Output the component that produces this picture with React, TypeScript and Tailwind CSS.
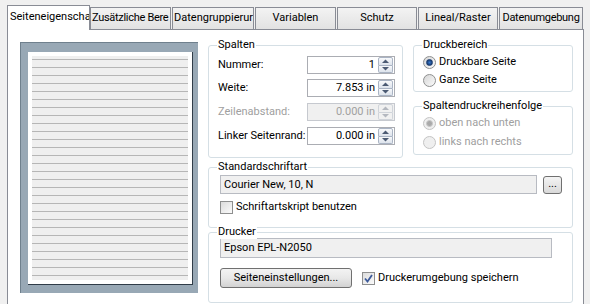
import React from "react";

const FONT = { fontFamily: "Roboto, 'Noto Sans', sans-serif" };

function Spinner({ disabled = false }: { disabled?: boolean }) {
  const arrow = disabled ? "#b4b8bf" : "#4b5a73";
  const border = disabled ? "border-[#d0d4da]" : "border-[#aab4c4]";
  const bg = disabled
    ? "bg-[#f1f1f1]"
    : "bg-linear-to-b from-[#f8f9fb] to-[#dde3ec]";
  return (
    <div className="flex flex-col w-[15px] h-[16px] mr-px">
      <div className={`flex-1 flex items-center justify-center border ${border} ${bg} rounded-t-[2px]`}>
        <svg width="7" height="4" viewBox="0 0 7 4">
          <path d="M0 4 L3.5 0.5 L7 4 Z" fill={arrow} />
        </svg>
      </div>
      <div className={`flex-1 flex items-center justify-center border border-t-0 ${border} ${bg} rounded-b-[2px]`}>
        <svg width="7" height="4" viewBox="0 0 7 4">
          <path d="M0 0 L3.5 3.5 L7 0 Z" fill={arrow} />
        </svg>
      </div>
    </div>
  );
}

function SpinInput({ value, disabled = false }: { value: string; disabled?: boolean }) {
  return (
    <div
      className={`flex items-center w-[88px] h-[18px] border ${
        disabled ? "border-[#c6c9cf] bg-[#f0f0f0] text-[#a0a0a0]" : "border-[#abadb3] bg-white text-black"
      }`}
    >
      <div className="flex-1 text-right pr-[3px] leading-[16px]">{value}</div>
      <Spinner disabled={disabled} />
    </div>
  );
}

function Group({
  label,
  className,
  children,
}: {
  label: string;
  className: string;
  children: React.ReactNode;
}) {
  return (
    <div className={`relative border border-[#d5dfe5] rounded-[3px] ${className}`}>
      <span className="absolute left-[8px] -top-[8px] px-[1px] bg-white leading-[14px] whitespace-nowrap">
        {label}
      </span>
      {children}
    </div>
  );
}

function Radio({ checked, disabled, label }: { checked: boolean; disabled?: boolean; label: string }) {
  return (
    <div className={`flex items-center h-[18px] pl-[9px] gap-[3px] ${disabled ? "text-[#a0a0a0]" : "text-black"}`}>
      <span
        className={`w-[13px] h-[13px] rounded-full border flex items-center justify-center ${
          disabled
            ? "border-[#c4c4c4] bg-[#efefef]"
            : "border-[#8e8f8f] bg-linear-to-br from-[#d6d6d6] to-[#fbfbfb]"
        }`}
      >
        {checked && (
          <span
            className={`w-[7px] h-[7px] rounded-full ${
              disabled
                ? "bg-[#a9a9a9] border border-[#c8c8c8]"
                : "bg-radial from-[#3a7bd0] to-[#0e2a56] border border-[#17396e]"
            }`}
          />
        )}
      </span>
      <span className="leading-[16px] whitespace-nowrap">{label}</span>
    </div>
  );
}

function Checkbox({ checked, label }: { checked: boolean; label: string }) {
  return (
    <div className="flex items-center h-[16px] gap-[3px]">
      <span className="w-[13px] h-[13px] border border-[#8e8f8f] bg-linear-to-br from-[#dcdcdc] to-[#fbfbfb] flex items-center justify-center">
        {checked && (
          <svg width="9" height="9" viewBox="0 0 9 9">
            <path d="M1 4.5 L3.5 7.5 L8 1" stroke="#3c5a9a" strokeWidth="1.8" fill="none" />
          </svg>
        )}
      </span>
      <span className="leading-[16px] whitespace-nowrap">{label}</span>
    </div>
  );
}

const tabs: { label: string; w: string; align: "start" | "center"; extra?: string }[] = [
  { label: "Zusätzliche Bere", w: "w-[81px]", align: "start", extra: "tracking-[-0.3px]" },
  { label: "Datengruppierur", w: "w-[82px]", align: "start" },
  { label: "Variablen", w: "w-[81px]", align: "center" },
  { label: "Schutz", w: "w-[80px]", align: "center" },
  { label: "Lineal/Raster", w: "w-[80px]", align: "center" },
  { label: "Datenumgebung", w: "w-[84px]", align: "center", extra: "tracking-[-0.3px]" },
];

function PagePreview() {
  const lines = Array.from({ length: 28 });
  return (
    <div className="w-[178px] h-[251px] bg-[#98a8b5] border-t border-l border-[#6f808d] pl-[7px] pt-[9px] shrink-0">
      <div className="w-[165px] h-[233px] bg-white border-r border-b border-[#2f3c48] p-[4px]">
        <div className="h-[224px] bg-[#efefef] pt-[3px] flex flex-col gap-[7px]">
          {lines.map((_, i) => (
            <div key={i} className="h-px bg-[#b6b6b6]" />
          ))}
        </div>
      </div>
    </div>
  );
}

export default function App() {
  return (
    <div
      className="w-[590px] h-[304px] bg-[#f0f0f0] overflow-hidden flex flex-col text-[11px] text-black"
      style={FONT}
    >
      {/* Tabs */}
      <div className="flex items-end h-[30px] pl-[7px] relative z-10">
        <div className="w-[83px] h-[25px] bg-white border-l border-t border-r border-[#898c95] flex items-center pl-[2px] pb-[2px] overflow-hidden whitespace-nowrap">
          Seiteneigenscha
        </div>
        {tabs.map((t, i) => (
          <div
            key={t.label}
            className={`${t.w} ${i > 0 ? "ml-px" : ""} h-[22px] mb-px bg-linear-to-b from-[#f3f3f3] to-[#e2e2e2] border-l border-t border-r border-[#898c95] flex items-center ${
              t.align === "start" ? "justify-start pl-px" : "justify-center"
            } overflow-hidden whitespace-nowrap ${t.extra ?? ""}`}
          >
            {t.label}
          </div>
        ))}
      </div>

      {/* Panel */}
      <div className="-mt-px ml-[7px] mr-[6px] flex-1 bg-white border-l border-t border-r border-[#898c95] flex pl-[12px] pt-[12px]">
        <PagePreview />

        <div className="ml-[10px] mt-[3px] w-[365px] flex flex-col">
          <div className="flex items-start gap-[10px]">
            <Group label="Spalten" className="w-[195px] pt-[10px] pb-[12px] pl-[9px] pr-[7px]">
              <div className="flex items-center justify-between h-[18px]">
                <span>Nummer:</span>
                <SpinInput value="1" />
              </div>
              <div className="flex items-center justify-between h-[18px] mt-[5px]">
                <span>Weite:</span>
                <SpinInput value="7.853 in" />
              </div>
              <div className="flex items-center justify-between h-[18px] mt-[6px]">
                <span className="text-[#a0a0a0]">Zeilenabstand:</span>
                <SpinInput value="0.000 in" disabled />
              </div>
              <div className="flex items-center justify-between h-[18px] mt-[6px]">
                <span>Linker Seitenrand:</span>
                <SpinInput value="0.000 in" />
              </div>
            </Group>

            <div className="w-[160px] flex flex-col">
              <Group label="Druckbereich" className="pt-[7px] pb-[2px]">
                <Radio checked label="Druckbare Seite" />
                <Radio checked={false} label="Ganze Seite" />
              </Group>
              <Group label="Spaltendruckreihenfolge" className="mt-[14px] pt-[7px] pb-[3px]">
                <Radio checked disabled label="oben nach unten" />
                <div className="mt-px">
                  <Radio checked={false} disabled label="links nach rechts" />
                </div>
              </Group>
            </div>
          </div>

          <Group label="Standardschriftart" className="mt-[9px] pt-[7px] pb-[12px] pl-[11px] pr-[10px]">
            <div className="flex items-end gap-[6px]">
              <div className="flex-1 h-[19px] border border-[#b8bbc2] bg-[#f0f0f0] flex items-center pl-[3px] leading-[16px]">
                Courier New, 10, N
              </div>
              <button className="w-[19px] h-[18px] rounded-[3px] border border-[#707070] bg-linear-to-b from-[#f4f4f4] to-[#d9d9d9] flex items-center justify-center leading-[10px] pb-[3px]">
                ...
              </button>
            </div>
            <div className="mt-[5px]">
              <Checkbox checked={false} label="Schriftartskript benutzen" />
            </div>
          </Group>

          <Group label="Drucker" className="mt-[4px] pt-[5px] pb-[14px] pl-[11px]">
            <div className="w-[332px] h-[20px] border border-[#b8bbc2] bg-[#f0f0f0] flex items-center pl-[3px] leading-[16px]">
              Epson EPL-N2050
            </div>
            <div className="mt-[10px] flex items-center gap-[10px]">
              <button className="w-[132px] h-[20px] rounded-[3px] border border-[#707070] bg-linear-to-b from-[#f3f3f3] via-[#e8e8e8] to-[#d2d2d2] flex items-center justify-center leading-[16px]">
                Seiteneinstellungen...
              </button>
              <Checkbox checked label="Druckerumgebung speichern" />
            </div>
          </Group>
        </div>
      </div>
    </div>
  );
}
